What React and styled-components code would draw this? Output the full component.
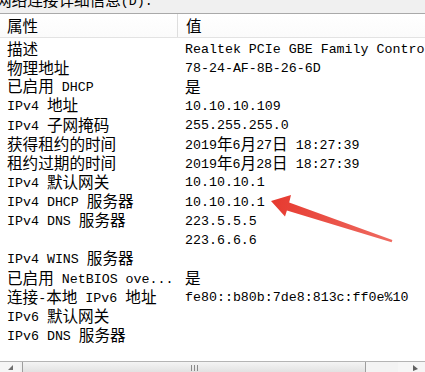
import React from "react";
import styled, { createGlobalStyle } from "styled-components";

const Global = createGlobalStyle`
  html, body { margin: 0; padding: 0; background: #f0f0f0; overflow: hidden; }
  body { width: 425px; height: 372px; }
`;

const LATIN = `"Liberation Mono", "DejaVu Sans Mono", monospace`;
const HAN = `"Noto Sans CJK SC", "Noto Sans CJK JP", sans-serif`;

const Dialog = styled.div`
  position: relative;
  width: 425px;
  height: 372px;
  overflow: hidden;
  display: flex;
  flex-direction: column;
  color: #000;
`;

const Caption = styled.div`
  height: 16px;
  margin-top: -8px;
  margin-left: -4px;
  display: flex;
  align-items: center;
  white-space: nowrap;
`;

const ListBox = styled.div`
  margin-top: 5px;
  flex: 1;
  background: #fff;
  border-top: 1px solid #a9a9a9;
  display: flex;
  flex-direction: column;
  min-height: 0;
`;

const Header = styled.div`
  height: 23px;
  display: grid;
  grid-template-columns: 178px 1fr;
  border-bottom: 1px solid #e3e3e3;
  background: linear-gradient(#ffffff, #fbfbfb);
`;

const HeadCell = styled.div`
  display: flex;
  align-items: center;
  padding-left: ${(p) => (p.$first ? 7 : 8)}px;
  border-right: ${(p) => (p.$first ? "1px solid #dedede" : "none")};
  white-space: nowrap;
`;

const Rows = styled.div`
  flex: 1;
  padding-top: 1px;
`;

const Row = styled.div`
  height: 19.13px;
  display: grid;
  grid-template-columns: 178px 1fr;
`;

const Cell = styled.div`
  display: flex;
  align-items: center;
  padding-left: 7px;
  white-space: nowrap;
  overflow: hidden;
`;

/* one line of mixed text: Latin and Han runs share a baseline */
const Line = styled.span`
  display: block;
  line-height: 17px;
  white-space: nowrap;
`;

const Latin = styled.span`
  font-family: ${LATIN};
  font-size: 13.3px;
  white-space: pre;
  vertical-align: 1px;
`;

const Han = styled.span`
  font-family: ${HAN};
  font-size: 15.6px;
`;

const HAN_RE = /[\u3000-\u9fff\uff00-\uffef]/;

const Text = ({ children }) => {
  const parts = String(children).split(/([\u3000-\u9fff\uff00-\uffef]+)/).filter(Boolean);
  return (
    <Line>
      {parts.map((p, i) => (HAN_RE.test(p) ? <Han key={i}>{p}</Han> : <Latin key={i}>{p}</Latin>))}
    </Line>
  );
};

const ScrollBar = styled.div`
  height: 10px;
  display: flex;
  border-top: 1px solid #b4b4b4;
  background: #f0f0f0;
`;

const ArrowBtn = styled.div`
  width: ${(p) => p.$w}px;
  display: flex;
  align-items: flex-start;
  justify-content: ${(p) => (p.$right ? "flex-end" : "center")};
  padding-right: ${(p) => (p.$right ? 7 : 0)}px;
  padding-top: 3px;
  background: #f6f6f6;
`;

const Thumb = styled.div`
  flex: 1;
  margin-left: 2px;
  border-left: 1px solid #9e9e9e;
  border-right: 1px solid #9e9e9e;
  background: linear-gradient(#f4f4f4, #e2e2e2);
  display: flex;
  justify-content: center;
  align-items: flex-start;
  padding-top: 3px;
  gap: 2px;
`;

const Grip = styled.i`
  width: 1px;
  height: 6px;
  background: #8a8a8a;
`;

const Track = styled.div`
  width: 32px;
  background: #f3f3f3;
`;

const Overlay = styled.svg`
  position: absolute;
  left: 0;
  top: 0;
  pointer-events: none;
`;

const rows = [
  ["描述", "Realtek PCIe GBE Family Controller"],
  ["物理地址", "78-24-AF-8B-26-6D"],
  ["已启用 DHCP", "是"],
  ["IPv4 地址", "10.10.10.109"],
  ["IPv4 子网掩码", "255.255.255.0"],
  ["获得租约的时间", "2019年6月27日 18:27:39"],
  ["租约过期的时间", "2019年6月28日 18:27:39"],
  ["IPv4 默认网关", "10.10.10.1"],
  ["IPv4 DHCP 服务器", "10.10.10.1"],
  ["IPv4 DNS 服务器", "223.5.5.5"],
  ["", "223.6.6.6"],
  ["IPv4 WINS 服务器", ""],
  ["已启用 NetBIOS ove...", "是"],
  ["连接-本地 IPv6 地址", "fe80::b80b:7de8:813c:ff0e%10"],
  ["IPv6 默认网关", ""],
  ["IPv6 DNS 服务器", ""],
];

export default function App() {
  return (
    <>
      <Global />
      <Dialog>
        <Caption>
          <Text>网络连接详细信息(D):</Text>
        </Caption>
        <ListBox>
          <Header>
            <HeadCell $first>
              <Text>属性</Text>
            </HeadCell>
            <HeadCell>
              <Text>值</Text>
            </HeadCell>
          </Header>
          <Rows>
            {rows.map(([k, v], i) => (
              <Row key={i}>
                <Cell>{k && <Text>{k}</Text>}</Cell>
                <Cell>{v && <Text>{v}</Text>}</Cell>
              </Row>
            ))}
          </Rows>
          <ScrollBar>
            <ArrowBtn $w={20}>
              <svg width="5" height="5" viewBox="0 0 5 5">
                <path d="M5 0 L5 5 L0 5 Z" fill="#707070" />
              </svg>
            </ArrowBtn>
            <Thumb>
              <Grip />
              <Grip />
              <Grip />
            </Thumb>
            <Track />
            <ArrowBtn $w={20} $right>
              <svg width="5" height="6" viewBox="0 0 5 6">
                <path d="M0 0 L5 4 L0 6 Z" fill="#606060" />
              </svg>
            </ArrowBtn>
          </ScrollBar>
        </ListBox>

        <Overlay width="425" height="372" viewBox="0 0 425 372">
          <defs>
            <linearGradient id="arrowFill" x1="270" y1="200" x2="392" y2="241" gradientUnits="userSpaceOnUse">
              <stop offset="0" stopColor="#e6392f" />
              <stop offset="1" stopColor="#ef6b61" />
            </linearGradient>
          </defs>
          <path
            d="M271 201 L291 195 L289.2 202.6 L392.4 240 L391.6 242.2 L286.9 210.6 L285 216.5 Z"
            fill="url(#arrowFill)"
          />
        </Overlay>
      </Dialog>
    </>
  );
}
